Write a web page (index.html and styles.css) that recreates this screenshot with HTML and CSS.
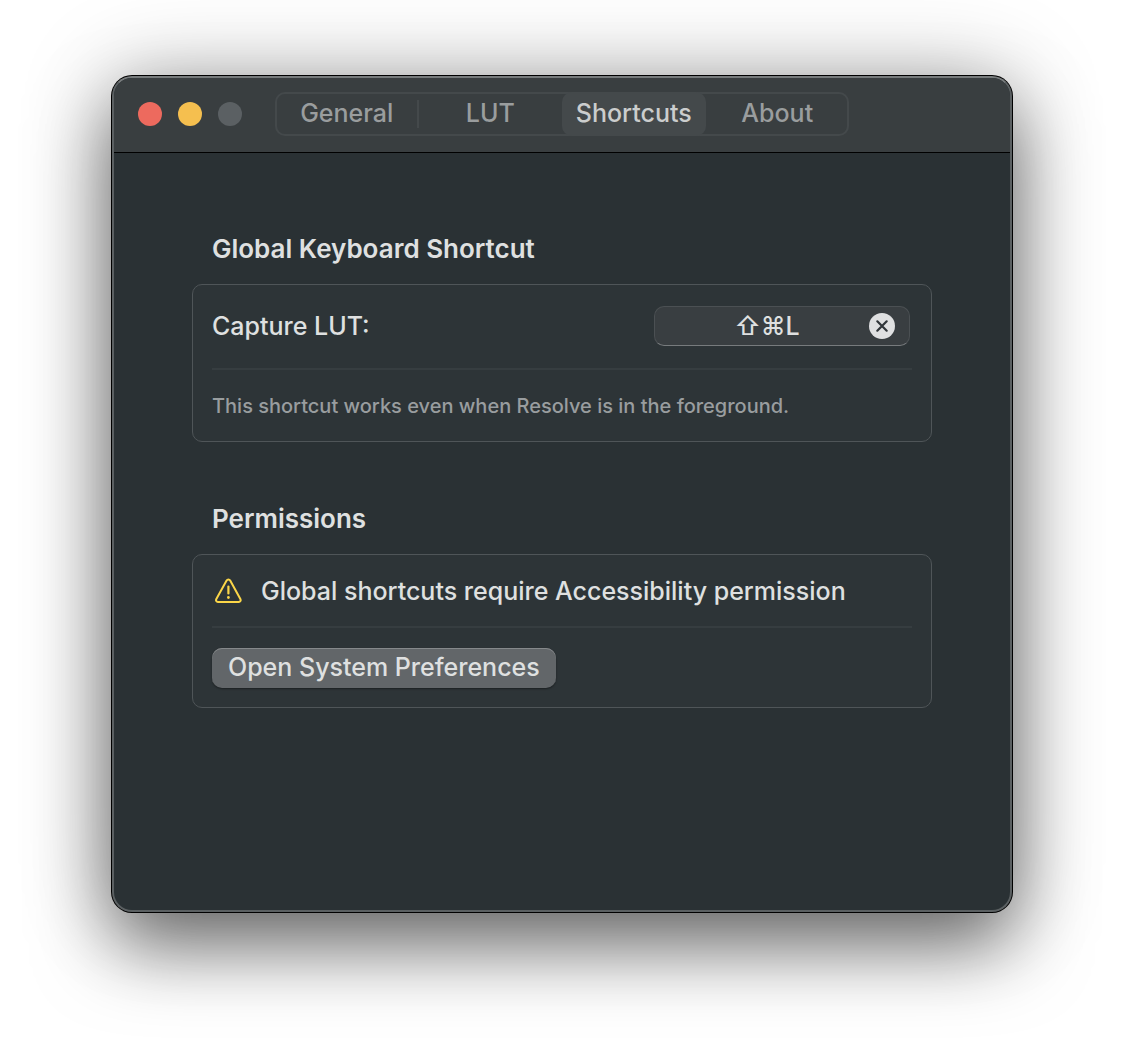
FILE: index.html
```html
<!DOCTYPE html>
<html lang="en">
<head>
<meta charset="utf-8">
<title>Shortcuts</title>
<link rel="stylesheet" href="styles.css">
</head>
<body>
<main class="window">
  <header class="titlebar">
    <div class="lights">
      <button class="light close" aria-label="Close"></button>
      <button class="light minimize" aria-label="Minimize"></button>
      <button class="light zoom" aria-label="Zoom" disabled></button>
    </div>
    <nav class="tabs">
      <button class="tab divided">General</button>
      <button class="tab">LUT</button>
      <button class="tab selected" aria-current="page">Shortcuts</button>
      <button class="tab">About</button>
    </nav>
  </header>
  <div class="content">
    <section class="group">
      <h2 class="heading">Global Keyboard Shortcut</h2>
      <div class="box">
        <div class="row capture-row">
          <label for="capture">Capture LUT:</label>
          <div class="recorder">
            <input class="recorder-input" id="capture" type="text" value="⇧⌘L" readonly>
            <button class="clear" aria-label="Clear shortcut">
              <svg width="26" height="26" viewBox="0 0 26 26"><circle cx="13" cy="13" r="13" fill="#dfe0e1"/><path d="M8.3 8.3l9.4 9.4M17.7 8.3l-9.4 9.4" stroke="#303539" stroke-width="2.2" stroke-linecap="round"/></svg>
            </button>
          </div>
        </div>
        <p class="row note">This shortcut works even when Resolve is in the foreground.</p>
      </div>
    </section>
    <section class="group">
      <h2 class="heading">Permissions</h2>
      <div class="box">
        <p class="row warning">
          <svg width="32" height="28" viewBox="0 0 32 28" fill="none" stroke="#fbd648" stroke-linecap="round" stroke-linejoin="round"><path d="M14.6 3.6L4.2 22.2a1.9 1.9 0 0 0 1.7 2.8h20.9a1.9 1.9 0 0 0 1.7-2.8L18.2 3.6a2.1 2.1 0 0 0-3.6 0z" stroke-width="2"/><path d="M16.4 9.5v7" stroke-width="2.2"/><path d="M16.4 20.4v.1" stroke-width="2.8"/></svg>
          Global shortcuts require Accessibility permission
        </p>
        <div class="row action">
          <button class="push">Open System Preferences</button>
        </div>
      </div>
    </section>
  </div>
</main>
</body>
</html>
```
FILE: styles.css
```css
* { box-sizing: border-box; }
body {
  margin: 0;
  padding: 76px 112px 148px;
  background: #fff;
  color: #dfe0e0;
  font: 500 25px/32px Inter, "Liberation Sans", sans-serif;
}
button, input { font: inherit; color: inherit; }
h2, p { margin: 0; }
.window {
  min-height: 836px;
  border-radius: 20px;
  overflow: hidden;
  background: #2a3134;
  border: 2px solid #5b6062;
  border-top-color: #777b7c;
  box-shadow: 0 0 0 1px #000, 0 36px 76px rgba(0, 0, 0, .5), 0 0 90px rgba(0, 0, 0, .28);
}
.titlebar {
  display: flex;
  align-items: center;
  gap: 33px;
  height: 75px;
  padding: 0 24px 2px;
  background: #393e40;
  border-bottom: 1px solid #000;
}
.lights { display: flex; gap: 16px; }
.light { width: 24px; height: 24px; padding: 0; border: 0; border-radius: 50%; }
.close { background: #ed6a5e; }
.minimize { background: #f5bf4f; }
.zoom { background: #5b6063; }
.tabs {
  display: grid;
  grid-template-columns: repeat(4, 1fr);
  width: 574px;
  border-radius: 10px;
  box-shadow: inset 0 0 0 2px #44494b;
}
.tab {
  height: 44px;
  padding: 0 0 2px;
  border: 0;
  border-radius: 10px;
  background: none;
  color: #9a9d9e;
}
.divided { background: linear-gradient(#44494b, #44494b) right center / 2px 28px no-repeat; border-radius: 0; }
.selected { background: #44494b; color: #cbcdcd; }
.content {
  display: grid;
  gap: 59px;
  padding: 78px;
}
.heading { padding: 0 20px; font-size: 26px; line-height: 36px; font-weight: 600; }
.box {
  margin-top: 17px;
  padding: 0 19px;
  border: 1px solid #4f5558;
  border-radius: 10px;
  background: #2d3437;
}
.row + .row { border-top: 2px solid #363d40; }
.capture-row { display: flex; align-items: center; justify-content: space-between; height: 83px; padding: 0 2px 1px 0; }
.recorder { position: relative; width: 256px; }
.recorder-input {
  display: block;
  width: 100%;
  height: 40px;
  padding: 0 30px 0 0;
  border: 1px solid #4b5053;
  border-bottom-color: #777b7d;
  border-radius: 10px;
  background: #393e41;
  text-align: center;
}
.clear { position: absolute; top: 7px; right: 15px; padding: 0; border: 0; background: none; display: flex; }
.note { padding: 20px 0 19px; color: #999d9f; font-size: 20px; }
.warning { display: flex; align-items: center; gap: 17px; height: 71px; }
.action { padding: 20px 0 19px; }
.push {
  display: block;
  height: 40px;
  padding: 0 16px 2px;
  border: 0;
  border-radius: 10px;
  background: #626669;
  box-shadow: inset 0 1px #85898b, 0 1px 2px rgba(0, 0, 0, .4);
}
```
